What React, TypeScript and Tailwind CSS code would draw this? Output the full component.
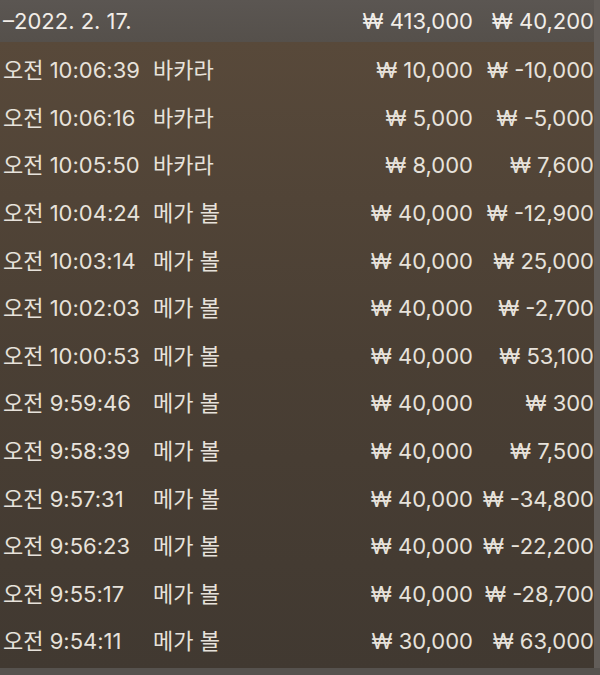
import React from "react";

const rows: [string, string, string, string][] = [
  ["오전 10:06:39", "바카라", "₩ 10,000", "₩ -10,000"],
  ["오전 10:06:16", "바카라", "₩ 5,000", "₩ -5,000"],
  ["오전 10:05:50", "바카라", "₩ 8,000", "₩ 7,600"],
  ["오전 10:04:24", "메가 볼", "₩ 40,000", "₩ -12,900"],
  ["오전 10:03:14", "메가 볼", "₩ 40,000", "₩ 25,000"],
  ["오전 10:02:03", "메가 볼", "₩ 40,000", "₩ -2,700"],
  ["오전 10:00:53", "메가 볼", "₩ 40,000", "₩ 53,100"],
  ["오전 9:59:46", "메가 볼", "₩ 40,000", "₩ 300"],
  ["오전 9:58:39", "메가 볼", "₩ 40,000", "₩ 7,500"],
  ["오전 9:57:31", "메가 볼", "₩ 40,000", "₩ -34,800"],
  ["오전 9:56:23", "메가 볼", "₩ 40,000", "₩ -22,200"],
  ["오전 9:55:17", "메가 볼", "₩ 40,000", "₩ -28,700"],
  ["오전 9:54:11", "메가 볼", "₩ 30,000", "₩ 63,000"],
];

export default function App() {
  return (
    <div
      className="w-[600px] h-[675px] overflow-hidden flex flex-col bg-[#443b33]"
      style={{ fontFamily: "Inter, 'Noto Sans CJK KR', sans-serif" }}
    >
      <div className="flex flex-1">
        <div className="w-[594px] flex flex-col">
          <div className="h-[42px] flex items-center bg-gradient-to-b from-[#5b5652] to-[#55504b] text-[22px] text-[#f1ede8] pl-[3px]">
            <div className="flex-1">–2022. 2. 17.</div>
            <div className="w-[152px] text-right">₩ 413,000</div>
            <div className="w-[121px] text-right">₩ 40,200</div>
          </div>
          <div className="flex-1 flex flex-col pt-[5px] bg-gradient-to-b from-[#58493a] via-[#4a3f34] to-[#413931] text-[22px] text-[#e7e2db]">
            {rows.map((r, i) => (
              <div key={i} className="h-[47.6px] flex items-center pl-[3px]">
                <div className="w-[150px] whitespace-nowrap">{r[0]}</div>
                <div className="flex-1 whitespace-nowrap">{r[1]}</div>
                <div className="w-[152px] text-right whitespace-nowrap">{r[2]}</div>
                <div className="w-[121px] text-right whitespace-nowrap">{r[3]}</div>
              </div>
            ))}
          </div>
        </div>
        <div className="w-[6px] bg-[#625d59]" />
      </div>
      <div className="h-[7px] bg-[#56524e]" />
    </div>
  );
}
